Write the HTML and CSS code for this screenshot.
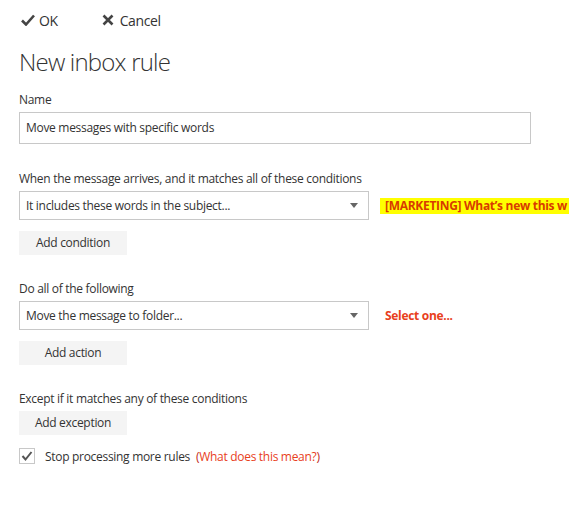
FILE: index.html
```html
<!DOCTYPE html>
<html>
<head>
<meta charset="utf-8">
<link rel="stylesheet" href="styles.css">
</head>
<body>
<div class="page">
  <div class="toolbar">
    <span class="tool">
      <svg class="ico" width="14" height="12" viewBox="0 0 14 12"><path d="M1 6.5 L5 10.5 L13 1.5" fill="none" stroke="#444" stroke-width="2.6"/></svg>
      <span>OK</span>
    </span>
    <span class="tool cancel">
      <svg class="ico" width="12" height="12" viewBox="0 0 12 12"><path d="M1.5 1.5 L10.5 10.5 M10.5 1.5 L1.5 10.5" fill="none" stroke="#444" stroke-width="2.6"/></svg>
      <span>Cancel</span>
    </span>
  </div>
  <h1 class="title">New inbox rule</h1>

  <div class="label first">Name</div>
  <div class="textbox">Move messages with specific words</div>

  <div class="label sec">When the message arrives, and it matches all of these conditions</div>
  <div class="row">
    <div class="select">It includes these words in the subject...<span class="arrow"></span></div>
    <div class="value"><span class="hl">[MARKETING] What’s new this w</span></div>
  </div>
  <div class="btn">Add condition</div>

  <div class="label sec">Do all of the following</div>
  <div class="row">
    <div class="select">Move the message to folder...<span class="arrow"></span></div>
    <div class="value"><span class="pick">Select one...</span></div>
  </div>
  <div class="btn">Add action</div>

  <div class="label sec">Except if it matches any of these conditions</div>
  <div class="btn">Add exception</div>

  <div class="check-row">
    <span class="checkbox">
      <svg width="14" height="14" viewBox="0 0 14 14"><path d="M2.5 7 L5.5 10.5 L11.5 3" fill="none" stroke="#555" stroke-width="2"/></svg>
    </span>
    <span class="check-text">Stop processing more rules</span>
    <span class="help">(<span class="help-link">What does this mean?</span>)</span>
  </div>
</div>
</body>
</html>
```

FILE: styles.css
```css
html, body {
  margin: 0;
  padding: 0;
  background: #fff;
  overflow: hidden;
}
body {
  font-family: "Open Sans", "Noto Sans", "Liberation Sans", sans-serif;
  font-size: 12px;
  letter-spacing: -0.3px;
  color: #333;
}
.page {
  padding-left: 19px;
  width: 550px;
}
.toolbar {
  height: 40px;
  display: flex;
  align-items: center;
  padding-left: 2px;
  font-size: 14px;
  letter-spacing: -0.4px;
  color: #333;
}
.tool {
  display: flex;
  align-items: center;
  gap: 4px;
}
.cancel {
  margin-left: 44px;
  gap: 6px;
}
.title {
  margin: 6px 0 0;
  font-size: 24px;
  line-height: 32px;
  letter-spacing: -0.8px;
  font-weight: 300;
  color: #333;
  font-family: "Open Sans", "Noto Sans", sans-serif;
}
.label {
  line-height: 16px;
  margin-bottom: 4px;
}
.label.first { margin-top: 14px; }
.label.sec { margin-top: 26px; }
.textbox + .label.sec { margin-top: 27px; }
.textbox {
  box-sizing: border-box;
  width: 512px;
  height: 32px;
  border: 1px solid #c8c8c8;
  padding: 0 6px;
  line-height: 30px;
}
.row {
  display: flex;
  align-items: center;
  white-space: nowrap;
}
.select {
  box-sizing: border-box;
  width: 350px;
  height: 29px;
  border: 1px solid #c8c8c8;
  padding: 0 6px;
  line-height: 27px;
  position: relative;
  flex: none;
}
.arrow {
  position: absolute;
  right: 10px;
  top: 11px;
  width: 0;
  height: 0;
  border-left: 4px solid transparent;
  border-right: 4px solid transparent;
  border-top: 5px solid #666;
}
.value {
  margin-left: 11px;
  flex: none;
}
.hl {
  background: #ffff00;
  color: #d83b01;
  font-weight: bold;
  padding: 1px 4px 1px 5px;
  display: inline-block;
  line-height: 14px;
}
.pick {
  color: #e8401c;
  font-weight: bold;
  padding-left: 5px;
}
.btn {
  margin-top: 11px;
  width: 108px;
  height: 24px;
  background: #f4f4f4;
  text-align: center;
  line-height: 24px;
  color: #333;
}
.label + .btn {
  margin-top: 4px;
}
.check-row {
  margin-top: 13px;
  display: flex;
  align-items: center;
  height: 16px;
}
.checkbox {
  box-sizing: border-box;
  width: 16px;
  height: 16px;
  border: 1px solid #c8c8c8;
  display: flex;
  align-items: center;
  justify-content: center;
}
.check-text {
  margin-left: 10px;
}
.help {
  margin-left: 6px;
  color: #c0281a;
}
.help-link {
  color: #e8401c;
}
```
